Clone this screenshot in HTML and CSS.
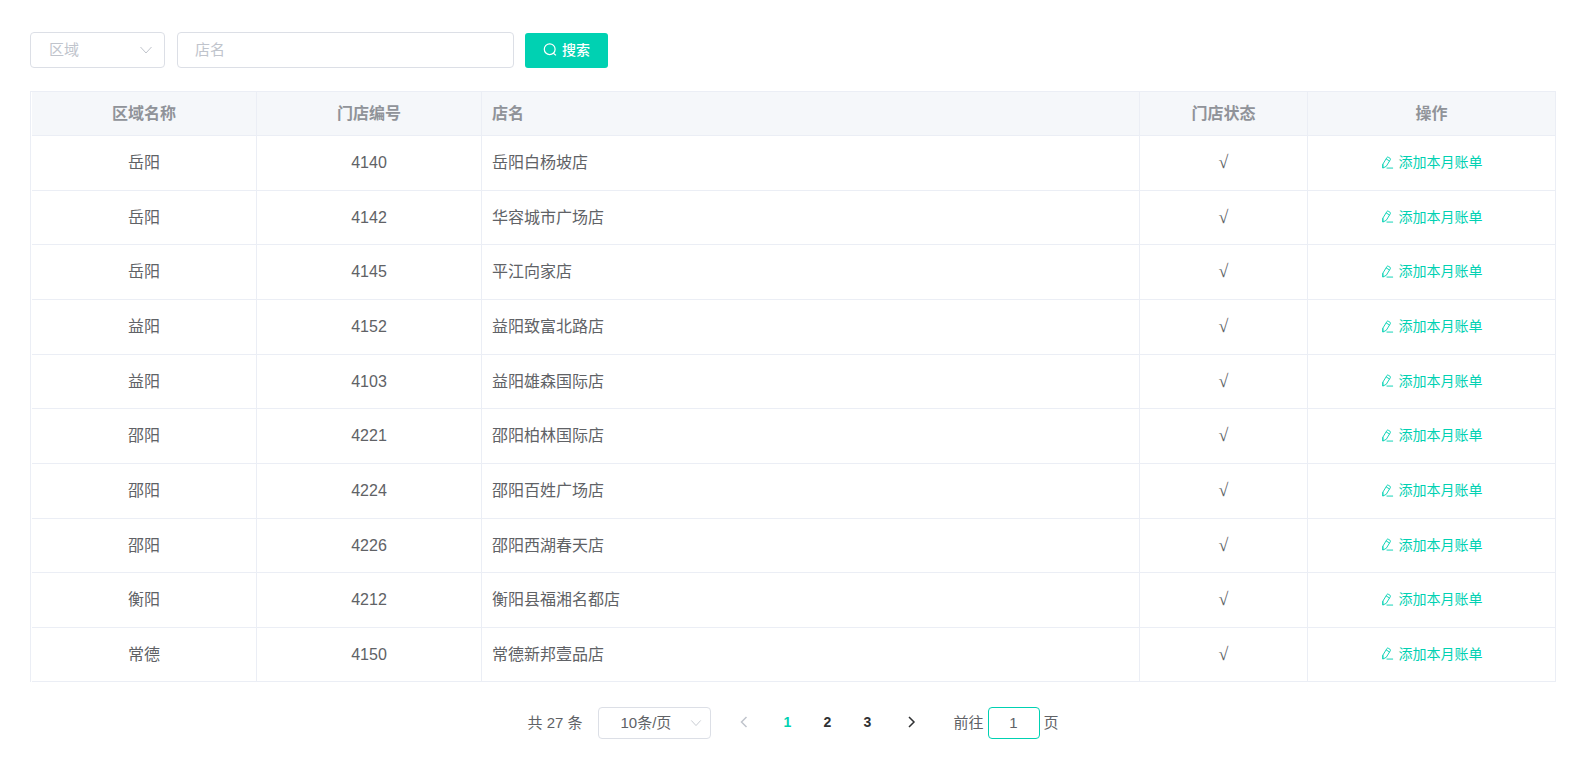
FILE: index.html
```html
<!DOCTYPE html>
<html lang="zh-CN">
<head>
<meta charset="utf-8">
<title>门店账单</title>
<link rel="stylesheet" href="styles.css">
</head>
<body>
<svg class="sprite" aria-hidden="true">
  <symbol id="edit" viewBox="0 0 14 14"><path d="M2 8.8 6.4 1.6Q7 .8 7.8 1.3L9.8 2.5Q10.6 3 10.1 3.9L5.7 11.1 2 13ZM2 8.8V13M5.5 3.1 9.2 5.4M6 13H13"/></symbol>
  <symbol id="down" viewBox="0 0 14 14"><path d="M1.5 4 7 10 12.5 4"/></symbol>
</svg>
<main class="page">
  <form class="filters">
    <div class="select region">
      <select aria-label="区域"><option>区域</option></select>
      <svg class="arrow"><use href="#down"/></svg>
    </div>
    <input class="field name" type="text" placeholder="店名" aria-label="店名">
    <button class="search" type="button">
      <svg viewBox="0 0 14 14"><circle cx="6.7" cy="6.2" r="5.4"/><path d="M10.4 10.2 13 12.4"/></svg>搜索
    </button>
  </form>
  <table class="stores">
    <colgroup><col class="c-region"><col class="c-code"><col class="c-name"><col class="c-state"><col class="c-action"></colgroup>
    <thead><tr><th>区域名称</th><th>门店编号</th><th class="left">店名</th><th>门店状态</th><th>操作</th></tr></thead>
    <tbody id="rows"></tbody>
  </table>
  <nav class="pager" aria-label="分页">
    <span class="total">共 27 条</span>
    <div class="select size">
      <select aria-label="每页条数"><option>10条/页</option></select>
      <svg class="arrow"><use href="#down"/></svg>
    </div>
    <div class="pages">
      <button type="button" class="step" disabled aria-label="上一页"><svg viewBox="0 0 14 14"><path d="M9.5 2 4.5 7 9.5 12"/></svg></button>
      <button type="button" class="current">1</button>
      <button type="button">2</button>
      <button type="button">3</button>
      <button type="button" class="step" aria-label="下一页"><svg viewBox="0 0 14 14"><path d="M4 2 9 7 4 12"/></svg></button>
    </div>
    <label class="jump">前往<input type="text" value="1">页</label>
  </nav>
</main>
<script src="app.js"></script>
</body>
</html>
```
FILE: styles.css
```css
* { box-sizing: border-box; }
body {
  margin: 0;
  background: #fff;
  color: #606266;
  font: 16px/24px "Liberation Sans", "Noto Sans CJK SC", sans-serif;
}
button, input, select { font: inherit; color: inherit; }
svg { fill: none; stroke: currentColor; }
.sprite { display: none; }
.page { padding: 32px 19px 24px 30px; }

.filters { display: flex; align-items: flex-end; gap: 12px; margin-bottom: 23px; }
.select { position: relative; }
.select select, .field, .jump input {
  width: 100%;
  border: 1px solid #dcdfe6;
  border-radius: 4px;
  background: #fff;
  outline: none;
  font-size: 15px;
  appearance: none;
}
.region { width: 135px; color: #c0c4cc; }
.region select { display: block; height: 36px; padding: 0 36px 0 18px; }
.arrow { position: absolute; right: 12px; top: 0; width: 14px; height: 100%; color: #c0c4cc; pointer-events: none; }
.filters .field { width: 337px; height: 36px; padding: 0 17px 2px; }
.field::placeholder { color: #c0c4cc; opacity: 1; }
.search {
  display: flex;
  align-items: center;
  justify-content: center;
  gap: 5px;
  width: 83px;
  height: 35px;
  margin-left: -1px;
  padding: 0 0 2px;
  border: 0;
  border-radius: 3px;
  background: #00d1b2;
  color: #fff;
  font-size: 14px;
  font-weight: 500;
}
.search svg { width: 14px; height: 14px; stroke-width: 1.2; }

.stores {
  width: 100%;
  table-layout: fixed;
  border-collapse: separate;
  border-spacing: 0;
  border: 1px solid #ebeef5;
  border-width: 1px 0 0 1px;
  padding-left: 1px;
}
.c-region, .c-code { width: 225px; }
.c-state { width: 168px; }
.c-action { width: 248px; }
.stores th, .stores td {
  height: 55px;
  padding: 0 10px;
  border: 1px solid #ebeef5;
  border-width: 0 1px 1px 0;
  text-align: center;
}
.stores tr:nth-child(3n+2) td, .stores tr:last-child td { height: 54px; }
.stores th { height: 44px; background: #f5f7fa; color: #909399; font-weight: 700; }
.stores .left { text-align: left; }
.stores .state { padding-bottom: 2px; font-family: "Liberation Serif", "Noto Sans CJK SC", serif; font-size: 18px; }
.add {
  display: inline-flex;
  align-items: center;
  gap: 5px;
  padding: 0;
  border: 0;
  background: none;
  color: #00d1b2;
  font-size: 14px;
}
.add svg { width: 13px; height: 13px; }

.pager { display: flex; align-items: center; justify-content: center; margin-top: 25px; font-size: 15px; }
.size { width: 113px; margin: 0 17px 0 15px; }
.size select { display: block; height: 32px; padding: 0 30px 0 22px; }
.size .arrow { right: 9px; width: 12px; }
.pages { display: flex; }
.pages button {
  width: 40px;
  height: 32px;
  padding: 0 0 2px;
  border: 0;
  background: none;
  color: #303133;
  font-size: 14px;
  font-weight: 700;
}
.pages .step { display: grid; place-items: center; width: 32px; margin: 0 8px; }
.pages .step:first-child { margin-left: 0; }
.pages svg { width: 14px; height: 14px; stroke-width: 1.5; }
.pages .current { color: #00d1b2; }
.pages button:disabled { color: #c0c4cc; }
.jump { display: flex; align-items: center; gap: 4px; margin-left: 18px; }
.jump input { width: 52px; height: 32px; padding: 0 0 2px; border-color: #00d1b2; text-align: center; }
```
FILE: app.js
```js
const stores = [
  ["岳阳", "4140", "岳阳白杨坡店"],
  ["岳阳", "4142", "华容城市广场店"],
  ["岳阳", "4145", "平江向家店"],
  ["益阳", "4152", "益阳致富北路店"],
  ["益阳", "4103", "益阳雄森国际店"],
  ["邵阳", "4221", "邵阳柏林国际店"],
  ["邵阳", "4224", "邵阳百姓广场店"],
  ["邵阳", "4226", "邵阳西湖春天店"],
  ["衡阳", "4212", "衡阳县福湘名都店"],
  ["常德", "4150", "常德新邦壹品店"]
];
document.getElementById("rows").innerHTML = stores.map(([region, code, name]) => `
  <tr><td>${region}</td><td>${code}</td><td class="left">${name}</td><td class="state">√</td>
  <td><button type="button" class="add"><svg><use href="#edit"/></svg>添加本月账单</button></td></tr>`).join("");
```
